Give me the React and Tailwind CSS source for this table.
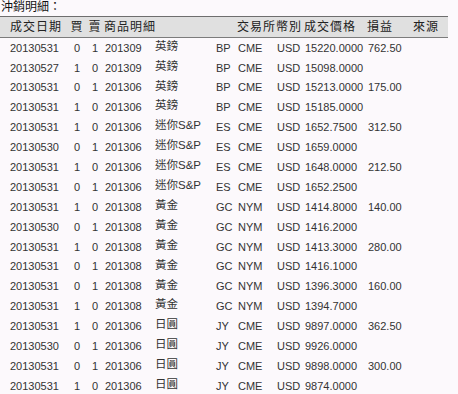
const rows = [
  ['20130531', '0', '1', '201309', '英鎊', 'BP', 'CME', 'USD', '15220.0000', '762.50'],
  ['20130527', '1', '0', '201309', '英鎊', 'BP', 'CME', 'USD', '15098.0000', ''],
  ['20130531', '0', '1', '201306', '英鎊', 'BP', 'CME', 'USD', '15213.0000', '175.00'],
  ['20130531', '1', '0', '201306', '英鎊', 'BP', 'CME', 'USD', '15185.0000', ''],
  ['20130531', '1', '0', '201306', '迷你S&P', 'ES', 'CME', 'USD', '1652.7500', '312.50'],
  ['20130530', '0', '1', '201306', '迷你S&P', 'ES', 'CME', 'USD', '1659.0000', ''],
  ['20130531', '1', '0', '201306', '迷你S&P', 'ES', 'CME', 'USD', '1648.0000', '212.50'],
  ['20130531', '0', '1', '201306', '迷你S&P', 'ES', 'CME', 'USD', '1652.2500', ''],
  ['20130531', '1', '0', '201308', '黃金', 'GC', 'NYM', 'USD', '1414.8000', '140.00'],
  ['20130530', '0', '1', '201308', '黃金', 'GC', 'NYM', 'USD', '1416.2000', ''],
  ['20130531', '1', '0', '201308', '黃金', 'GC', 'NYM', 'USD', '1413.3000', '280.00'],
  ['20130531', '0', '1', '201308', '黃金', 'GC', 'NYM', 'USD', '1416.1000', ''],
  ['20130531', '0', '1', '201308', '黃金', 'GC', 'NYM', 'USD', '1396.3000', '160.00'],
  ['20130531', '1', '0', '201308', '黃金', 'GC', 'NYM', 'USD', '1394.7000', ''],
  ['20130531', '1', '0', '201306', '日圓', 'JY', 'CME', 'USD', '9897.0000', '362.50'],
  ['20130530', '0', '1', '201306', '日圓', 'JY', 'CME', 'USD', '9926.0000', ''],
  ['20130531', '0', '1', '201306', '日圓', 'JY', 'CME', 'USD', '9898.0000', '300.00'],
  ['20130531', '1', '0', '201306', '日圓', 'JY', 'CME', 'USD', '9874.0000', ''],
]

export default function App() {
  return (
    <div
      className="w-[458px] h-[394px] overflow-hidden bg-[#fcf9fc] text-[#333]"
      style={{ fontFamily: '"Liberation Sans", "Noto Sans CJK TC", sans-serif' }}
    >
      {/* Title */}
      <div className="h-4 pl-px text-[12px] leading-[14px] text-[#111]">沖銷明細：</div>

      {/* Header */}
      <div className="flex items-center w-[448px] h-[22px] pl-[10px] bg-[#e0e0e0] border-t border-b border-t-[#6e6e6e] border-b-[#7c7c7c] text-[12px] tracking-[1px] text-[#222]">
        <div className="w-[58px]">成交日期</div>
        <div className="w-[18px] text-center">買</div>
        <div className="w-[18px] text-center">賣</div>
        <div className="w-[111px]">商品明細</div>
        <div className="w-[22px]"></div>
        <div className="w-[39px]">交易所</div>
        <div className="w-[28px]">幣別</div>
        <div className="w-[63px]">成交價格</div>
        <div className="w-[46px]">損益</div>
        <div className="w-[35px]">來源</div>
      </div>

      {/* Rows */}
      {rows.map((r, i) => (
        <div key={i} className="flex items-center h-[19.9px] pl-[10px] text-[11px] whitespace-nowrap">
          <div className="w-[58px]">{r[0]}</div>
          <div className="w-[18px] text-center">{r[1]}</div>
          <div className="w-[18px] text-center">{r[2]}</div>
          <div className="w-[50px] pl-px">{r[3]}</div>
          <div className="w-[61px] pl-px text-[11.5px] -mt-[3px]">{r[4]}</div>
          <div className="w-[22px] pl-px">{r[5]}</div>
          <div className="w-[39px] pl-px">{r[6]}</div>
          <div className="w-[28px] pl-px">{r[7]}</div>
          <div className="w-[63px] pl-px">{r[8]}</div>
          <div className="w-[46px] pl-px">{r[9]}</div>
          <div className="w-[35px]"></div>
        </div>
      ))}
    </div>
  )
}
